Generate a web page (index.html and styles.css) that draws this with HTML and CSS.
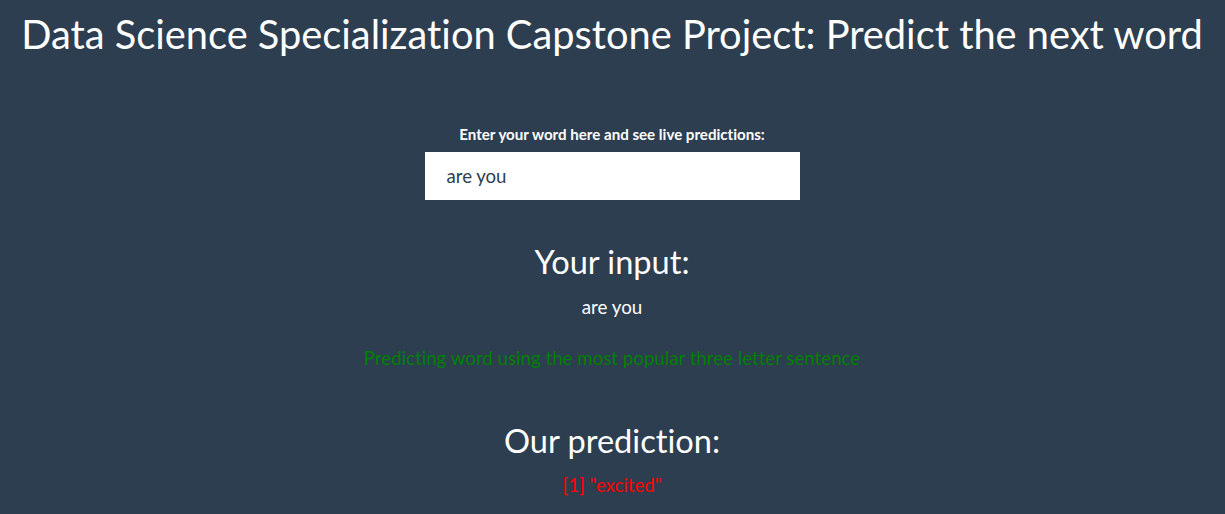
FILE: index.html
```html
<!DOCTYPE html>
<html>
<head>
<meta charset="utf-8">
<link rel="stylesheet" href="styles.css">
</head>
<body>
<div class="page">
  <h1 class="title">Data Science Specialization Capstone Project: Predict the next word</h1>
  <div class="form">
    <label class="label" for="word">Enter your word here and see live predictions:</label>
    <input class="input" id="word" type="text" value="are you">
  </div>
  <h2 class="heading h-input">Your input:</h2>
  <div class="echo">are you</div>
  <div class="method">Predicting word using the most popular three letter sentence</div>
  <h2 class="heading h-pred">Our prediction:</h2>
  <div class="result">[1] "excited"</div>
</div>
</body>
</html>
```
FILE: styles.css
```css
html, body {
  margin: 0;
  padding: 0;
  background: #2c3e50;
  height: 100%;
}
body {
  font-family: Lato, "Open Sans", sans-serif;
  font-variant-ligatures: none;
  color: #ffffff;
  font-size: 15px;
  overflow: hidden;
}
.page {
  display: flex;
  flex-direction: column;
  align-items: center;
  text-align: center;
  padding-right: 1px;
}
.title {
  font-weight: 400;
  font-size: 39.8px;
  line-height: 1.1;
  margin: 12px 0 0 0;
}
.form {
  display: flex;
  flex-direction: column;
  align-items: center;
  margin-top: 68px;
}
.label {
  font-weight: 700;
  font-size: 15.1px;
  line-height: 20px;
  margin-bottom: 8px;
}
.input {
  box-sizing: border-box;
  width: 375px;
  height: 48px;
  border: none;
  outline: none;
  background: #fff;
  color: #2c3e50;
  font-family: Lato, sans-serif;
  font-variant-ligatures: none;
  font-size: 18.6px;
  padding: 0 22px;
}
.heading {
  font-weight: 400;
  font-size: 32.6px;
  line-height: 1.1;
  margin: 0;
}
.h-input { margin-top: 44px; }
.echo {
  font-size: 18.8px;
  margin-top: 15px;
}
.method {
  color: #008000;
  font-size: 18.7px;
  margin-top: 29px;
}
.h-pred { margin-top: 54px; }
.result {
  color: #ff0000;
  font-size: 18.6px;
  margin-top: 16px;
}
```
